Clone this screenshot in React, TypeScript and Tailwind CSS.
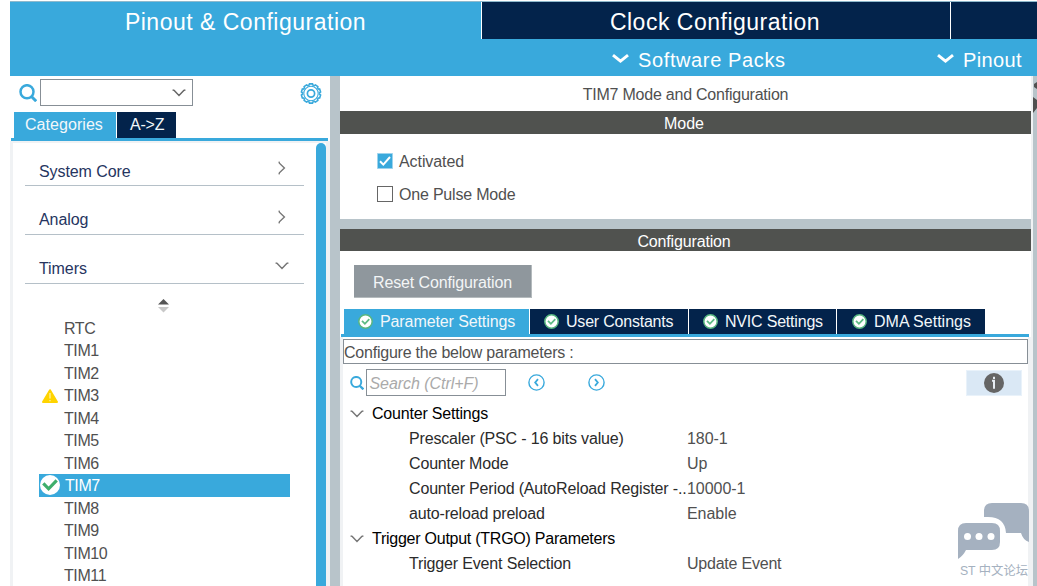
import React from "react";

const Chevron = ({ className }: { className: string }) => (
  <svg viewBox="0 0 14 8" className={className} fill="none" stroke="currentColor" strokeWidth="1.4">
    <path d="M0.6 1L2.2 1.4L7 6.4L11.8 1.4L13.4 1" />
  </svg>
);

const SearchIcon = ({ className }: { className: string }) => (
  <svg viewBox="0 0 18 18" className={className} fill="none" stroke="#39a9dc" strokeWidth="2.5">
    <circle cx="8" cy="7.7" r="6.5" />
    <path d="M12.2 12.2L17.2 17.2" strokeWidth="3" />
  </svg>
);

const Gear = () => (
  <svg viewBox="-11 -10.5 22 21" className="h-[21px] w-[22px]" fill="none" stroke="#39a9dc">
    {Array.from({ length: 10 }, (_, i) => (
      <path key={i} d="M-2.4 -7.6L-1.5 -9.6H1.5L2.4 -7.6" strokeWidth="1.6" transform={`rotate(${i * 36})`} />
    ))}
    <circle r="7.2" strokeWidth="1.1" />
    <circle r="3.6" strokeWidth="1.7" />
  </svg>
);

const TabCheck = () => (
  <svg viewBox="0 0 15 15" className="h-[15px] w-[15px] shrink-0">
    <circle cx="7.5" cy="7.5" r="6.7" fill="#fff" stroke="#58b681" strokeWidth="1.5" />
    <path d="M4 6.8l2.9 3L11.3 5.2" fill="none" stroke="#5dbb84" strokeWidth="1.8" />
  </svg>
);

const StepIcon = ({ next }: { next?: boolean }) => (
  <svg viewBox="0 0 17 17" className="h-[17px] w-[17px]" fill="none" stroke="#39a9dc">
    <circle cx="8.5" cy="8.5" r="7.6" strokeWidth="1.4" />
    <path d={next ? "M7 5.2l2.8 3.3L7 11.8" : "M10 5.2L7.2 8.5l2.8 3.3"} strokeWidth="1.8" />
  </svg>
);

const Category = ({ name, open, className }: { name: string; open?: boolean; className: string }) => (
  <div className={`ml-3 flex w-[279px] items-end justify-between border-b border-[#b5c0c8] pl-[14px] text-[#26355f] ${className}`}>
    <span className="leading-5 tracking-[-0.08px]">{name}</span>
    {open ? (
      <Chevron className="mr-[15px] mb-[13px] h-2 w-[14px] text-[#777]" />
    ) : (
      <Chevron className="mr-[15px] mb-[13px] h-2 w-[14px] -rotate-90 text-[#777]" />
    )}
  </div>
);

const timers = ["RTC", "TIM1", "TIM2", "TIM3", "TIM4", "TIM5", "TIM6", "TIM7", "TIM8", "TIM9", "TIM10", "TIM11"];

const TimerRow = ({ name }: { name: string }) => {
  const active = name === "TIM7";
  return (
    <div className={`flex h-[22.5px] w-[251px] shrink-0 items-center ${active ? "bg-[#39a9dc] text-white" : ""}`}>
      <span className="flex w-[25px] shrink-0 items-center">
        {name === "TIM3" && (
          <svg viewBox="0 0 16 14" className="mt-0.5 ml-[3px] h-[14px] w-4">
            <path d="M8 1.2L15 13H1Z" fill="#ffd400" stroke="#ffd400" strokeWidth="2" strokeLinejoin="round" />
            <path d="M8 4v5.5M8 11v1.3" stroke="#fff3b0" strokeWidth="1.2" />
          </svg>
        )}
        {active && (
          <svg viewBox="0 0 20 20" className="ml-px h-5 w-5">
            <circle cx="10" cy="10" r="10" fill="#fff" />
            <path d="M3.3 8.4l5.3 5.4L16.7 5.4" fill="none" stroke="#3eae6b" strokeWidth="3.2" />
          </svg>
        )}
      </span>
      <span className={active ? "ml-px pt-0.5 tracking-[-0.4px]" : "pt-0.5 tracking-[-0.4px]"}>{name}</span>
    </div>
  );
};

const tabs = [
  { name: "Parameter Settings", style: "w-[185px] bg-[#39a9dc] pl-[14px] tracking-[-0.1px]" },
  { name: "User Constants", style: "w-[158px] bg-[#03234b] pl-[14px] tracking-[-0.21px]" },
  { name: "NVIC Settings", style: "w-[147px] bg-[#03234b] pl-[14px] tracking-[-0.2px]" },
  { name: "DMA Settings", style: "w-[148px] bg-[#03234b] pl-[15px] tracking-[0px]" },
];

const groups = [
  {
    name: "Counter Settings",
    nameStyle: "tracking-[-0.2px]",
    rows: [
      ["Prescaler (PSC - 16 bits value)", "180-1"],
      ["Counter Mode", "Up"],
      ["Counter Period (AutoReload Register -..", "10000-1"],
      ["auto-reload preload", "Enable"],
    ],
  },
  {
    name: "Trigger Output (TRGO) Parameters",
    nameStyle: "tracking-[-0.25px]",
    rows: [["Trigger Event Selection", "Update Event"]],
  },
];

const MenuArrow = () => (
  <svg viewBox="0 0 17 10" className="mr-[9px] mb-px h-[10px] w-[17px]" fill="none" stroke="#fff" strokeWidth="3">
    <path d="M1 1.2l7.5 6L16 1.2" />
  </svg>
);

const Header = () => (
  <header className="ml-[10px] shrink-0 text-white">
    <div className="mt-px flex h-[38px] gap-px border-t border-[#8fb9cc] text-[23px] leading-10 tracking-[0.5px]">
      <div className="w-[471px] bg-[#39a9dc] text-center">Pinout &amp; Configuration</div>
      <div className="w-[468px] bg-[#03234b] pr-0.5 text-center">Clock Configuration</div>
      <div className="flex-1 bg-[#03234b]" />
    </div>
    <div className="flex h-[37px] items-center bg-[#39a9dc] pt-1 pl-[602px] text-[20px] tracking-[0.35px]">
      <MenuArrow />
      <span className="w-[299px] tracking-[0.62px]">Software Packs</span>
      <MenuArrow />
      <span>Pinout</span>
    </div>
  </header>
);

const Sidebar = () => (
  <aside className="ml-[10px] flex w-[320px] shrink-0 flex-col">
    <div className="flex h-9 shrink-0 items-start pt-[3px]">
      <SearchIcon className="mt-[5px] ml-[9px] h-[18px] w-[18px]" />
      <div className="ml-[3px] flex h-[27px] w-[153px] items-center justify-end border border-[#878f96] pr-1.5">
        <Chevron className="mt-px h-2 w-[14px] text-[#666]" />
      </div>
      <div className="mt-[3.5px] ml-[107px]">
        <Gear />
      </div>
    </div>
    <div className="ml-1 flex h-[26px] shrink-0 gap-px leading-[26px] tracking-[0.05px] text-[#f2f7fa]">
      <div className="w-[102px] bg-[#39a9dc] pl-[11px]">Categories</div>
      <div className="w-[59px] bg-[#03234b] pl-[13px] tracking-[-0.2px]">A-&gt;Z</div>
    </div>
    <div className="ml-px h-[3px] w-[317px] shrink-0 bg-[#39a9dc]" />
    <div className="flex min-h-0 flex-1 border-t-2 border-l-[3px] border-[#f0f2f4]">
      <div className="flex w-[303px] flex-col overflow-hidden">
        <Category name="System Core" className="h-[43px] shrink-0 [&>span]:mb-[3px]" />
        <Category name="Analog" className="h-[49px] shrink-0 [&>span]:mb-1" />
        <Category name="Timers" open className="h-[49px] shrink-0 [&>span]:mb-1" />
        <svg viewBox="0 0 11 14" className="mt-[15px] ml-[145px] h-[14px] w-[11px] shrink-0">
          <path d="M0 5.5L5.5 0L11 5.5Z" fill="#555" />
          <path d="M0 8L5.5 13.5L11 8Z" fill="#c8c8c8" />
        </svg>
        <div className="mt-[3.5px] ml-[26px] flex flex-col">
          {timers.map((t) => (
            <TimerRow key={t} name={t} />
          ))}
        </div>
      </div>
      <div className="w-[10px] rounded-t-[5px] bg-[#39a9dc]" />
      <div className="flex-1 bg-[#f0f2f4]" />
    </div>
  </aside>
);

const ForumMark = () => (
  <div className="absolute right-2 bottom-[6px] flex flex-col items-end text-[#a5b1c0]">
    <svg viewBox="0 0 71 56" className="h-14 w-[71px]">
      <path d="M26 14V8Q26 0 34 0H63Q71 0 71 8V39Q65 37 63 30H48Q47 14 30 14Z" fill="#a5b1c0" />
      <path d="M8 20H34Q42 20 42 28V39Q42 47 34 47H8Q5 53 0 56V28Q0 20 8 20Z" fill="#a5b1c0" />
      <g fill="#fff">
        <circle cx="9.5" cy="33.5" r="3.5" />
        <circle cx="21" cy="33.5" r="3.5" />
        <circle cx="33" cy="33.5" r="3.5" />
      </g>
    </svg>
    <div className="mt-[3px] mr-px text-[12.3px] leading-[18px] whitespace-nowrap">ST 中文论坛</div>
  </div>
);

const Parameters = () => (
  <div className="h-[249px] w-[691px] border-r-[3px] border-l-[3px] border-[#f0f2f4] pt-0.5">
    <div className="h-[25px] border border-[#878f96] leading-[25px] tracking-[-0.22px]">Configure the below parameters :</div>
    <div className="flex h-[37px] items-center">
      <SearchIcon className="ml-[7px] h-[14px] w-[14px]" />
      <div className="ml-0.5 h-[27px] w-[140px] border border-[#878f96] pl-[2.5px] leading-[27px] tracking-[-0.05px] text-[#aaa] italic">
        Search (Ctrl+F)
      </div>
      <div className="ml-[22px]">
        <StepIcon />
      </div>
      <div className="ml-[43px]">
        <StepIcon next />
      </div>
      <div className="ml-[361px] flex h-[26px] w-14 items-center justify-center border border-[#e9f2fa] bg-[#dae8f5]">
        <svg viewBox="0 0 20 20" className="h-5 w-5">
          <circle cx="10" cy="10" r="10" fill="#656565" />
          <path d="M10 3.8v2.2M8 7.8h2v8" fill="none" stroke="#e7edf3" strokeWidth="2" />
        </svg>
      </div>
    </div>
    {groups.map((g) => (
      <div key={g.name}>
        <div className={`flex h-[25px] items-center text-black ${g.nameStyle}`}>
          <Chevron className="mr-2 ml-[7px] h-2 w-[14px] text-[#777]" />
          {g.name}
        </div>
        {g.rows.map(([k, v]) => (
          <div key={k} className="flex h-[25px] items-center pl-[66px]">
            <span className="w-[278px] shrink-0 tracking-[-0.16px] whitespace-nowrap text-[#2b2b2b]">{k}</span>
            <span className={v === "Update Event" ? "tracking-[-0.22px]" : "tracking-[-0.05px]"}>{v}</span>
          </div>
        ))}
      </div>
    ))}
  </div>
);

const Main = () => (
  <main className="w-[691px] shrink-0">
    <h1 className="h-[35px] text-center leading-[37px] tracking-[-0.23px]">TIM7 Mode and Configuration</h1>
    <h2 className="h-[23px] bg-[#50524f] pr-[3px] text-center leading-[25px] text-white">Mode</h2>
    <section className="flex h-[85px] flex-col gap-[13px] pt-[17px] pl-[37px]">
      <label className="flex h-5 items-center gap-1.5">
        <svg viewBox="0 0 16 16" className="-mt-px h-4 w-4">
          <path d="M.5 .5h15v15H.5Z" fill="#39a9dc" stroke="#9dd3ed" />
          <path d="M3 8.2l3.3 3.4L13 4" fill="none" stroke="#fff" strokeWidth="2" />
        </svg>
        <span className="pt-px leading-5 tracking-[-0.08px]">Activated</span>
      </label>
      <label className="flex h-5 items-center gap-1.5">
        <span className="h-4 w-4 border-[1.5px] border-[#666]" />
        <span className="pt-px leading-5 tracking-[-0.2px]">One Pulse Mode</span>
      </label>
    </section>
    <div className="h-[10px] bg-[#b8c4ca]" />
    <h2 className="h-[22px] bg-[#50524f] pr-[3px] text-center leading-[25px] tracking-[-0.15px] text-white">Configuration</h2>
    <div className="mt-[14px] ml-[14px] h-[33px] w-[178px] border-r border-b border-[#b4babd] bg-[#8f979d] text-center leading-[35px] tracking-[-0.13px] text-[#f3f5f6]">
      Reset Configuration
    </div>
    <div className="mt-[11px] ml-1 flex h-[25px] gap-px">
      {tabs.map((t) => (
        <div key={t.name} className={`flex items-center gap-[7px] whitespace-nowrap text-[#f2f7fa] ${t.style}`}>
          <TabCheck />
          <span>{t.name}</span>
        </div>
      ))}
    </div>
    <div className="ml-px h-[3px] w-[688px] bg-[#39a9dc]" />
    <Parameters />
  </main>
);

export default function App() {
  return (
    <div className="relative flex h-[586px] w-[1037px] flex-col overflow-hidden bg-white font-['Liberation_Sans','Noto_Sans_CJK_SC',sans-serif] text-[16px] text-[#505050]">
      <Header />
      <div className="flex min-h-0 flex-1">
        <Sidebar />
        <div className="w-[10px] shrink-0 bg-[#b8c4ca]" />
        <Main />
        <div className="w-0.5 shrink-0 bg-[#f0f2f4]" />
        <div className="flex-1 bg-[#b8c4ca]">
          <svg viewBox="0 0 4 40" className="h-10 w-1" fill="#505050">
            <path d="M4 6L1 8V11L4 13ZM0 21L4 24V32L0 37Z" />
          </svg>
        </div>
      </div>
      <ForumMark />
    </div>
  );
}
